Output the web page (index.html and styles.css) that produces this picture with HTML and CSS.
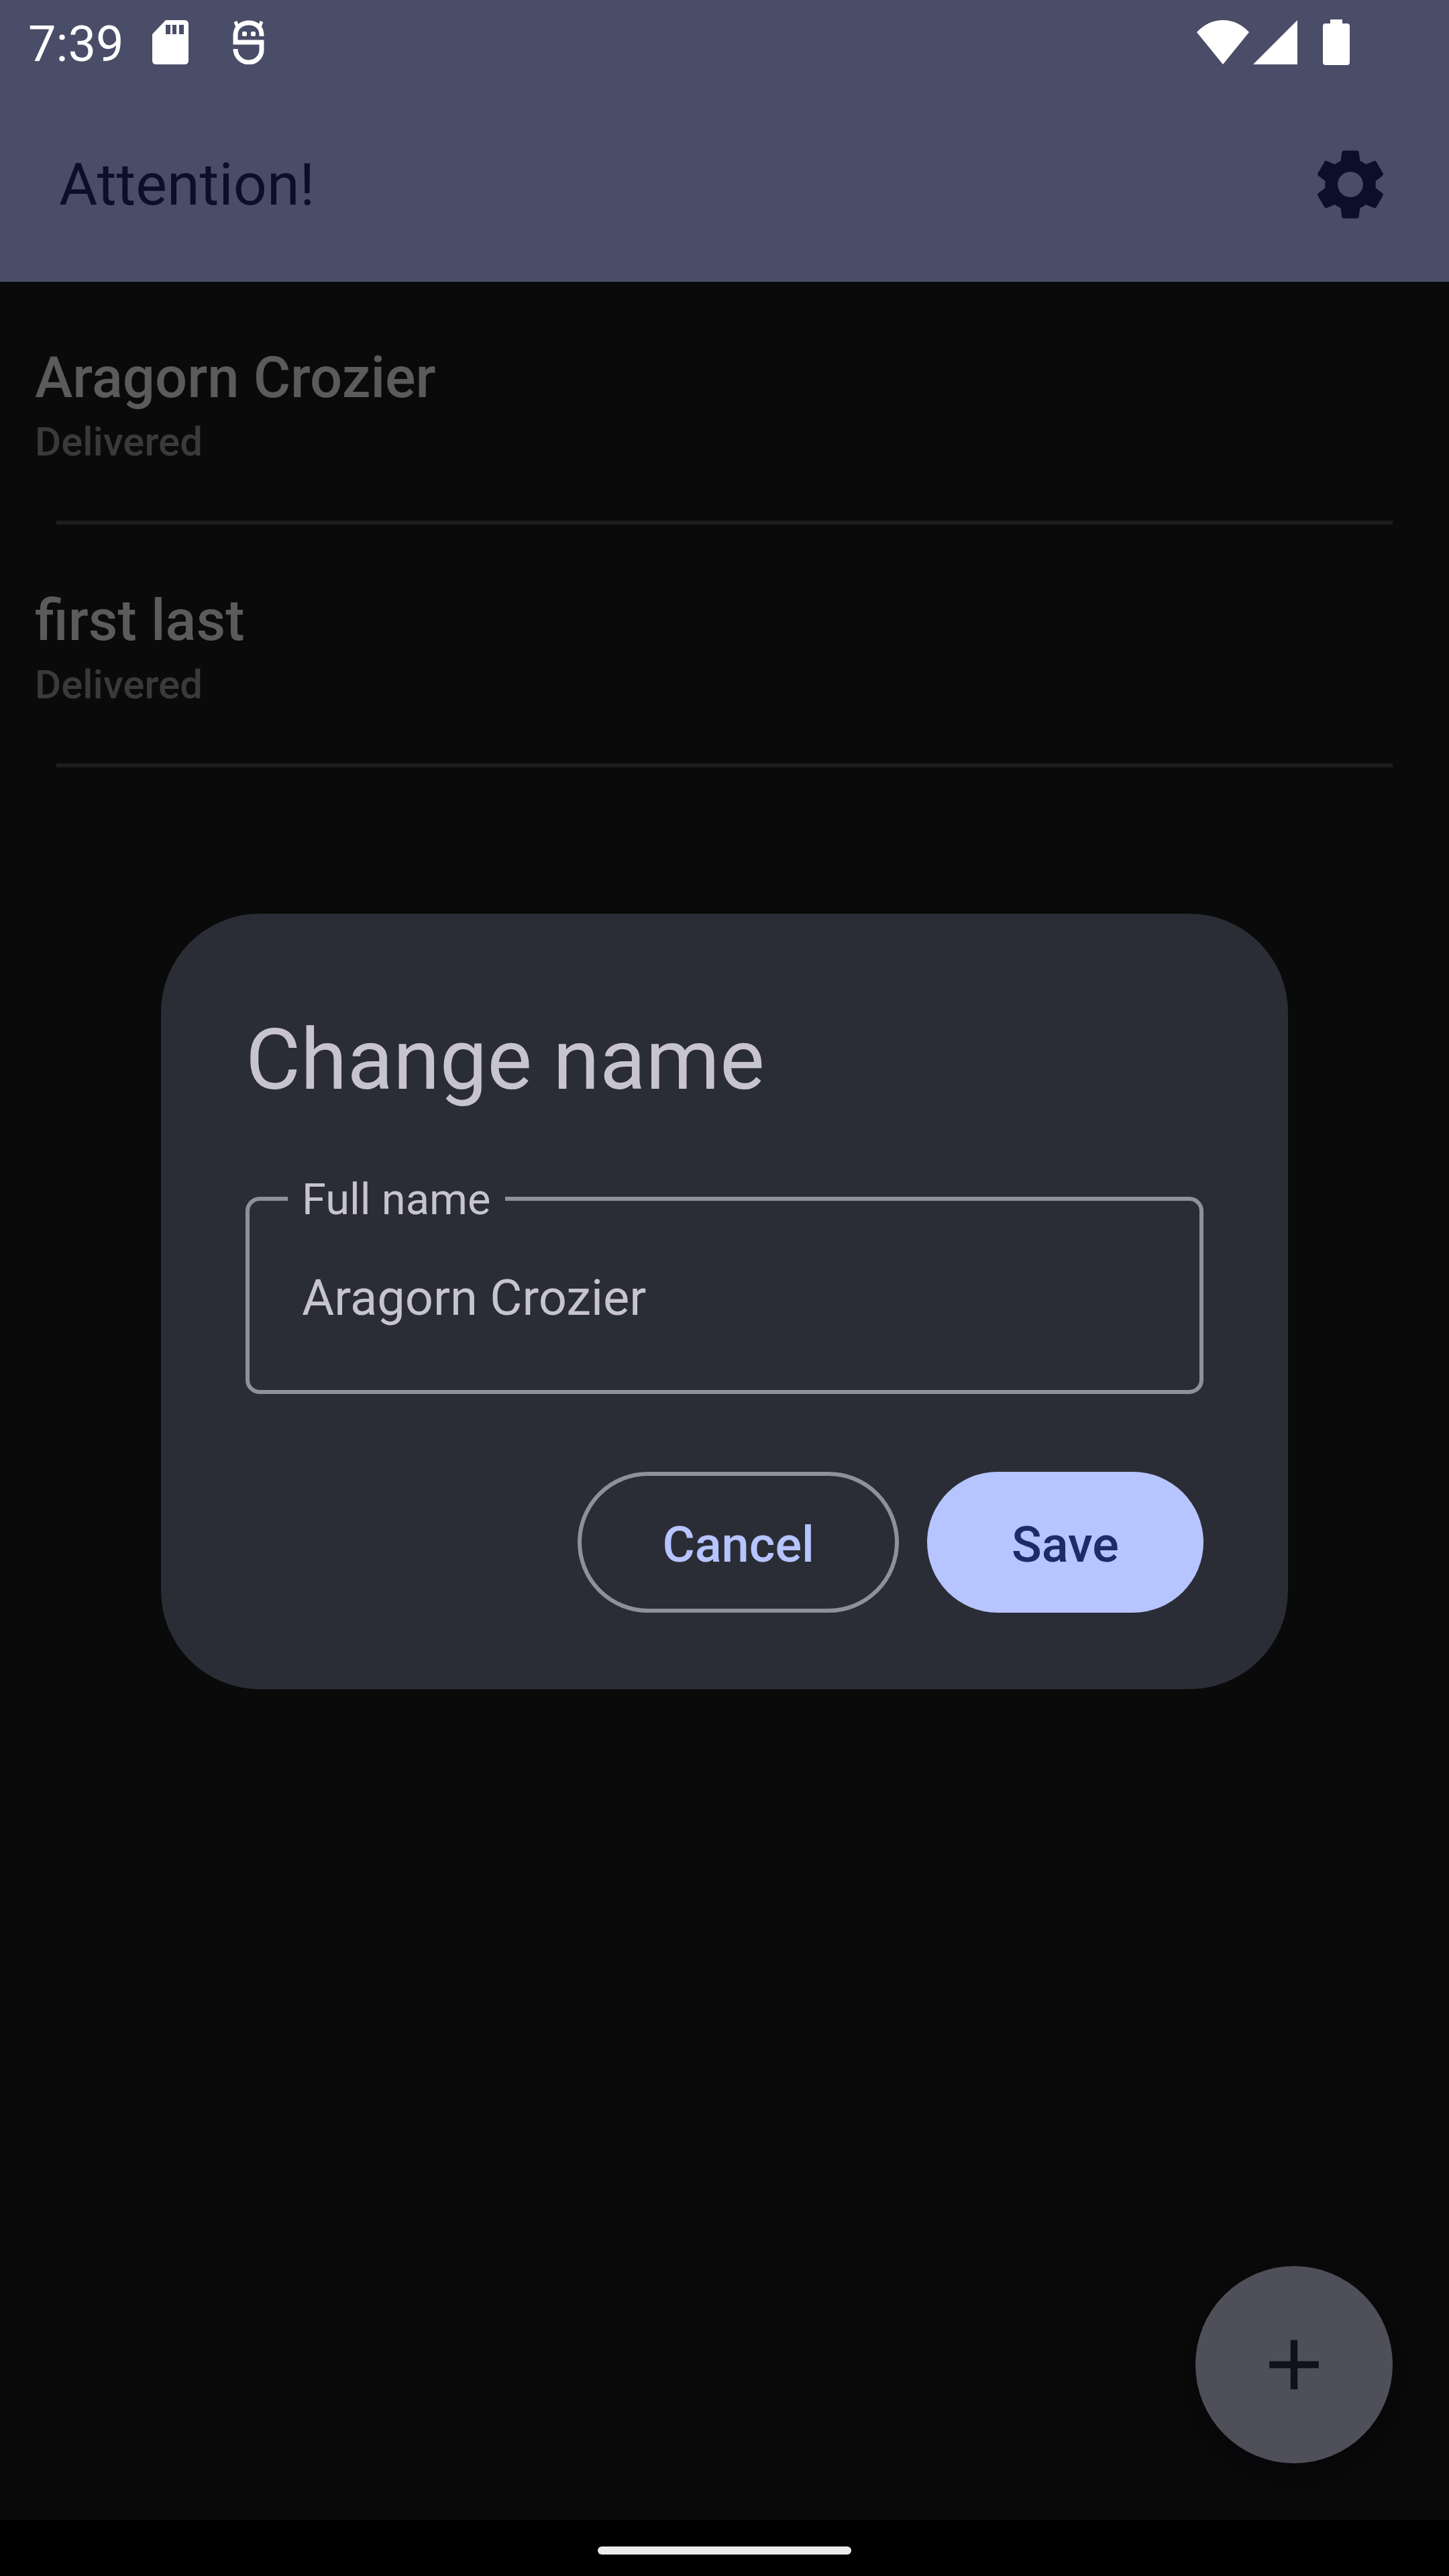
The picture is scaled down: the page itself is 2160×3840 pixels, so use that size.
FILE: index.html
```html
<!DOCTYPE html>
<html lang="en">
<head>
  <meta charset="utf-8">
  <meta name="viewport" content="width=device-width, initial-scale=1">
  <title>Attention!</title>
  <link rel="stylesheet" href="styles.css">
</head>
<body>
  <div class="screen">
    <header class="top">
      <div class="status">
        <div class="status-left">
          <span class="clock">7:39</span>
          <svg class="icon-sd" viewBox="0 0 54 66" aria-hidden="true">
            <path fill-rule="evenodd" d="M20 0H48Q54 0 54 6V60Q54 66 48 66H6Q0 66 0 60V21ZM20 7V21H27V7ZM30 7V21H36V7ZM40 7V21H47V7Z"/>
          </svg>
          <svg class="icon-app" viewBox="0 0 48 66" aria-hidden="true">
            <path class="line" d="M43 24V22C43 11 35 4 24 4S4 11 4 22V33H43V44C43 55 34 63 24 63S4 55 4 43"/>
            <path class="horn" d="M4 2L7 10M43 2L40 10"/>
            <rect x="14" y="17" width="7" height="7" rx="2"/>
            <rect x="27" y="17" width="7" height="7" rx="2"/>
          </svg>
        </div>
        <div class="status-right">
          <svg class="icon-wifi" viewBox="0 0 78 66" aria-hidden="true"><path d="M39 66L0 18Q17 0 39 0T78 18Z"/></svg>
          <svg class="icon-signal" viewBox="0 0 66 66" aria-hidden="true"><path d="M0 66L66 0V66Z"/></svg>
          <svg class="icon-battery" viewBox="0 0 40 68" aria-hidden="true"><path d="M11 0H29V6H36Q40 6 40 10V64Q40 68 36 68H4Q0 68 0 64V10Q0 6 4 6H11Z"/></svg>
        </div>
      </div>
      <div class="appbar">
        <h1 class="appbar-title">Attention!</h1>
        <button class="icon-button" type="button" aria-label="Settings">
          <svg viewBox="0 0 24 24" aria-hidden="true"><path d="M19.14 12.94c.04-.3.06-.61.06-.94 0-.32-.02-.64-.07-.94l2.03-1.58c.18-.14.23-.41.12-.61l-1.92-3.32c-.12-.22-.37-.29-.59-.22l-2.39.96c-.5-.38-1.03-.7-1.62-.94l-.36-2.54c-.04-.24-.24-.41-.48-.41h-3.84c-.24 0-.43.17-.47.41l-.36 2.54c-.59.24-1.13.57-1.62.94l-2.39-.96c-.22-.08-.47 0-.59.22L2.74 8.87c-.12.21-.08.47.12.61l2.03 1.58c-.05.3-.09.63-.09.94s.02.64.07.94l-2.03 1.58c-.18.14-.23.41-.12.61l1.92 3.32c.12.22.37.29.59.22l2.39-.96c.5.38 1.03.7 1.62.94l.36 2.54c.05.24.24.41.48.41h3.84c.24 0 .44-.17.47-.41l.36-2.54c.59-.24 1.13-.56 1.62-.94l2.39.96c.22.08.47 0 .59-.22l1.92-3.32c.12-.22.07-.47-.12-.61l-2.01-1.58zM12 15.6c-1.98 0-3.6-1.62-3.6-3.6s1.62-3.6 3.6-3.6 3.6 1.62 3.6 3.6-1.62 3.6-3.6 3.6z"/></svg>
        </button>
      </div>
    </header>

    <main class="content">
      <ul class="people">
        <li class="person">
          <span class="person-name">Aragorn Crozier</span>
          <span class="person-state">Delivered</span>
        </li>
        <li class="person">
          <span class="person-name">first last</span>
          <span class="person-state">Delivered</span>
        </li>
      </ul>
      <button class="fab" type="button" aria-label="Add">
        <svg viewBox="0 0 24 24" aria-hidden="true"><path d="M19 13h-6v6h-2v-6H5v-2h6V5h2v6h6z"/></svg>
      </button>
    </main>

    <footer class="navbar"><span class="handle"></span></footer>
  </div>

  <div class="overlay">
    <form class="dialog" role="dialog" aria-labelledby="dialog-title">
      <h2 class="dialog-title" id="dialog-title">Change name</h2>
      <div class="field">
        <label class="field-label" for="full-name">Full name</label>
        <input class="field-input" id="full-name" type="text" value="Aragorn Crozier">
      </div>
      <div class="actions">
        <button class="button button-outlined" type="button">Cancel</button>
        <button class="button button-filled" type="submit">Save</button>
      </div>
    </form>
  </div>
</body>
</html>
```

FILE: styles.css
```css
* {
  box-sizing: border-box;
}

body {
  margin: 0;
  background: #0a0a0a;
  font-family: Roboto, "Liberation Sans", sans-serif;
}

h1,
h2,
ul {
  margin: 0;
  padding: 0;
  font-weight: 400;
  list-style: none;
}

svg {
  display: block;
  fill: currentColor;
}

button,
input {
  margin: 0;
  padding: 0;
  border: 0;
  background: none;
  color: inherit;
  font: inherit;
}

.screen {
  display: flex;
  flex-direction: column;
  min-height: 100vh;
}

/* Status bar and app bar */
.top {
  background: #4a4d67;
  color: #0b0f2a;
}

.status {
  display: flex;
  justify-content: space-between;
  align-items: center;
  height: 126px;
  padding: 0 148px 0 42px;
  color: #fff;
}

.status-left,
.status-right {
  display: flex;
  align-items: center;
}

.clock {
  margin-right: 42px;
  padding-top: 6px;
  font-size: 74px;
  line-height: 84px;
}

.icon-sd {
  width: 54px;
  height: 66px;
}

.icon-app {
  width: 48px;
  height: 66px;
  margin-left: 66px;
}

.icon-app .line,
.icon-app .horn {
  fill: none;
  stroke: currentColor;
  stroke-width: 7;
}

.icon-app .horn {
  stroke-width: 5;
}

.icon-wifi {
  width: 78px;
  height: 66px;
}

.icon-signal {
  width: 66px;
  height: 66px;
  margin: 0 38px 0 6px;
}

.icon-battery {
  width: 40px;
  height: 68px;
}

.appbar {
  display: flex;
  justify-content: space-between;
  align-items: center;
  height: 294px;
  padding: 4px 84px 0 88px;
}

.appbar-title {
  font-size: 88px;
  line-height: 126px;
}

.icon-button svg,
.fab svg {
  width: 126px;
  height: 126px;
}

/* List */
.content {
  display: flex;
  flex: 1;
  flex-direction: column;
  justify-content: space-between;
}

.person {
  display: flex;
  flex-direction: column;
  padding: 84px 52px 0;
  font-weight: 500;
}

.person::after {
  height: 6px;
  margin: 80px 32px 0;
  background: #1d1d1f;
  content: "";
}

.person-name {
  color: #5b5b5d;
  font-size: 85px;
  line-height: 118px;
}

.person-state {
  color: #3a3a3a;
  font-size: 60px;
  line-height: 74px;
}

.fab {
  display: grid;
  place-items: center;
  align-self: flex-end;
  width: 294px;
  height: 294px;
  margin: 84px;
  border-radius: 50%;
  background: #4f4f59;
  box-shadow: 0 16px 40px #07070a;
  color: #10111b;
}

/* Gesture bar */
.navbar {
  display: flex;
  justify-content: center;
  align-items: center;
  height: 84px;
  padding-top: 8px;
  background: #000;
}

.handle {
  width: 378px;
  height: 12px;
  border-radius: 6px;
  background: #ebebeb;
}

/* Dialog */
.overlay {
  position: fixed;
  inset: 124px 0 84px;
  display: grid;
  place-items: center;
}

.dialog {
  display: flex;
  flex-direction: column;
  width: 1680px;
  max-width: calc(100% - 168px);
  padding: 126px 126px 114px;
  border-radius: 147px;
  background: #2b2d36;
  color: #c7c4d0;
}

.dialog-title {
  padding-top: 2px;
  font-size: 126px;
  line-height: 180px;
}

.field {
  position: relative;
  margin-top: 114px;
}

.field-label {
  position: absolute;
  top: -38px;
  left: 63px;
  padding: 0 21px;
  background: #2b2d36;
  font-size: 65px;
  line-height: 84px;
}

.field-input {
  display: block;
  width: 100%;
  height: 294px;
  padding: 6px 78px 0;
  border: 6px solid #91909a;
  border-radius: 21px;
  font-size: 74px;
  outline: none;
}

.actions {
  display: flex;
  justify-content: flex-end;
  gap: 42px;
  margin-top: 116px;
}

.button {
  height: 210px;
  padding: 6px 126px 0;
  border-radius: 105px;
  font-size: 74px;
  font-weight: 500;
}

.button-outlined {
  padding: 6px 120px 0;
  border: 6px solid #91909a;
  color: #b6c4ff;
}

.button-filled {
  background: #b6c4ff;
  color: #1d2b6b;
}
```
